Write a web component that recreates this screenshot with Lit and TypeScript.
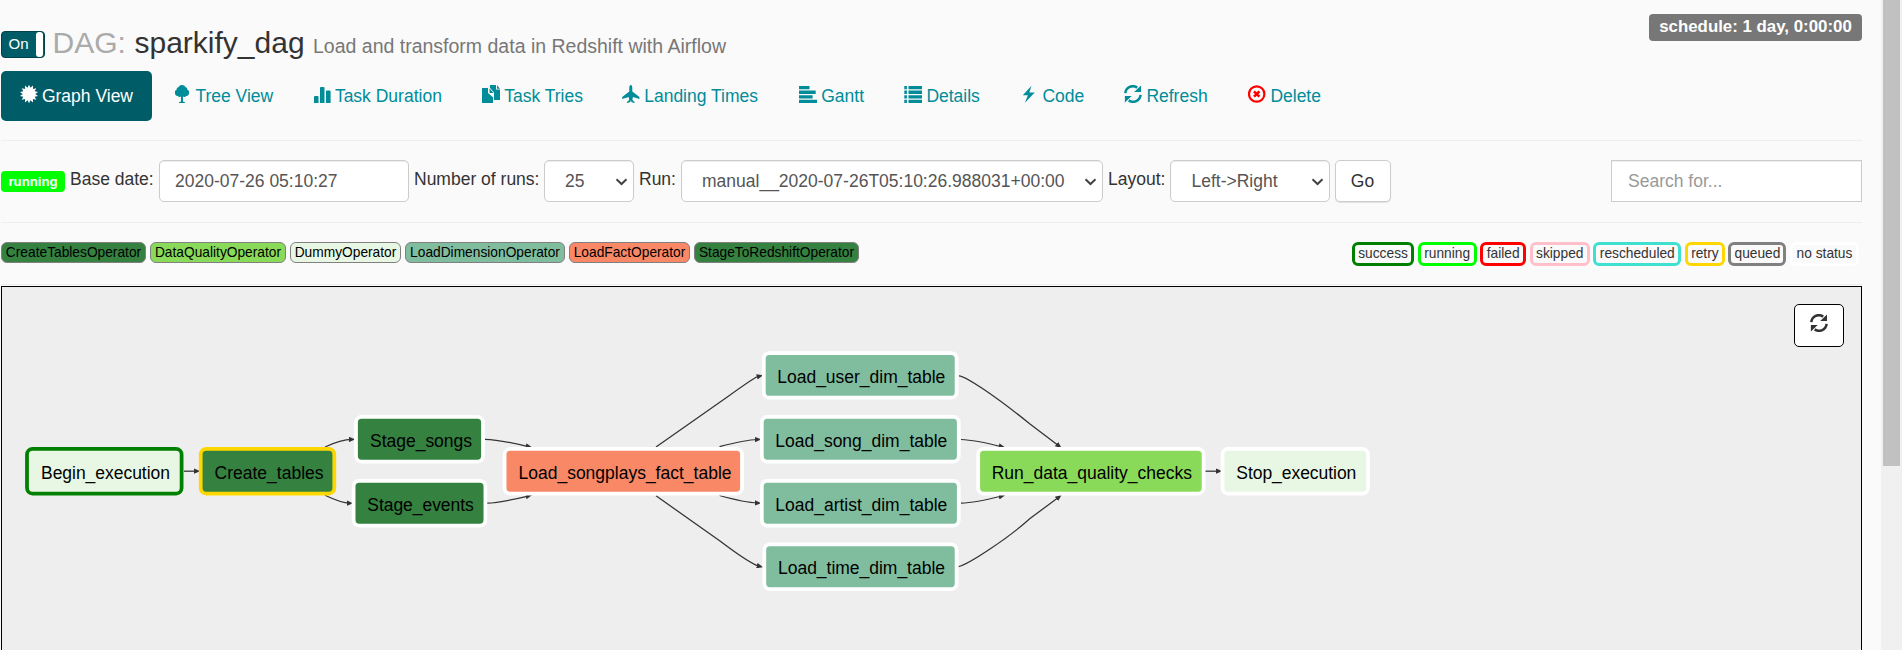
import { LitElement, html, svg, css } from 'lit';
import { customElement } from 'lit/decorators.js';

const refreshShape = svg`
  <path d="M1.3 8.2A7.6 7.6 0 0 1 13.2 2.6" fill="none" stroke="currentColor" stroke-width="2.5"/>
  <path d="M10.2 6.9L17 6.9L17 .4Z" fill="currentColor"/>
  <path d="M16.6 9.8A7.6 7.6 0 0 1 4.7 15.4" fill="none" stroke="currentColor" stroke-width="2.5"/>
  <path d="M7.7 11.1L.9 11.1L.9 17.6Z" fill="currentColor"/>`;

function starPoints(): string {
  const pts: string[] = [];
  for (let i = 0; i < 28; i++) {
    const r = i % 2 ? 6.3 : 9.3;
    const a = (i * Math.PI) / 14 - Math.PI / 2;
    pts.push(`${(9 + r * Math.cos(a)).toFixed(2)},${(9 + r * Math.sin(a)).toFixed(2)}`);
  }
  return pts.join(' ');
}

const icons: Record<string, unknown> = {
  certificate: svg`<polygon points=${starPoints()} fill="currentColor"/>`,
  tree: svg`<path fill="currentColor" d="M9 0C11 0 12.2 1.2 12.5 2.3C14 2.5 14.6 3.8 14.3 4.7C15.9 5.4 16.4 6.5 16 7.8C16.3 9.6 15 11 13.3 11C12.1 12.2 10.8 12 10 11.4V16.4L12 17.2V18H6V17.2L8 16.4V11.4C7.2 12 5.9 12.2 4.7 11C3 11 1.7 9.6 2 7.8C1.6 6.5 2.1 5.4 3.7 4.7C3.4 3.8 4 2.5 5.5 2.3C5.8 1.2 7 0 9 0Z"/>`,
  stats: svg`<path fill="currentColor" d="M1 18V12Q1 11 2 11H4.500Q5.500 11 5.500 12V18ZM7 18V3Q7 2 8 2H10.500Q11.500 2 11.500 3V18ZM13 18V6.500Q13 5.500 14 5.500H16.600Q17.600 5.500 17.600 6.500V18Z"/>`,
  duplicate: svg`<path fill="currentColor" d="M0 3H6V8L11 12.300V18H0ZM7.500 3.600L11.500 8H7.500ZM8 0H14V4.500H18V15H12V7.500L8 3ZM15 .3L18 3.700H15Z"/>`,
  plane: svg`<path fill="currentColor" d="M8.800 0C9.900 0 10.300 1.600 10.300 3V6.500L17.400 12V14L10.900 11.900L10.400 15L12.600 17V18L9.600 17.200L8.800 15.500L8 17.200L5 18V17L7.200 15L6.700 11.900L.2 14V12L7.300 6.500V3C7.300 1.600 7.700 0 8.800 0Z"/>`,
  align: svg`<path fill="currentColor" d="M0 1H10.500V4.300H0ZM0 5.600H16.700V8.900H0ZM0 10.200H13.600V13.500H0ZM0 14.700H18V18H0Z"/>`,
  list: svg`<path fill="currentColor" d="M.3 1H2.900V4.300H.3ZM4.500 1H18V4.300H4.500ZM.3 5.600H2.900V8.900H.3ZM4.500 5.600H18V8.900H4.500ZM.3 10.200H2.900V13.500H.3ZM4.500 10.200H18V13.500H4.500ZM.3 14.700H2.900V18H.3ZM4.500 14.700H18V18H4.500Z"/>`,
  flash: svg`<path fill="currentColor" d="M11.500 .7L2.800 10.300H7.900L4.800 17.900L14.700 7.600H9.300Z"/>`,
  refresh: refreshShape,
  remove: svg`<circle cx="8.700" cy="9" r="7.700" fill="none" stroke="currentColor" stroke-width="2.200"/><path d="M6 6.300L11.400 11.700M11.400 6.300L6 11.700" stroke="currentColor" stroke-width="2.600"/>`,
};

const icon = (name: string) =>
  html`<svg class="icon ${name}" viewBox="0 0 18 18" width="18" height="18">${icons[name]}</svg>`;

const tabs: [string, string, number][] = [
  ['certificate', 'Graph View', 151],
  ['tree', 'Tree View', 137],
  ['stats', 'Task Duration', 166.8],
  ['duplicate', 'Task Tries', 137.5],
  ['plane', 'Landing Times', 174.5],
  ['align', 'Gantt', 102.7],
  ['list', 'Details', 113.5],
  ['flash', 'Code', 101.5],
  ['refresh', 'Refresh', 121.5],
  ['remove', 'Delete', 112],
];

const operators: [string, string, number][] = [
  ['CreateTablesOperator', '#358140', 145],
  ['DataQualityOperator', '#89da59', 136],
  ['DummyOperator', '#e8f7e4', 111],
  ['LoadDimensionOperator', '#80bd9e', 160],
  ['LoadFactOperator', '#f98866', 121],
  ['StageToRedshiftOperator', '#358140', 165],
];

const states: [string, string, number][] = [
  ['success', 'green', 62],
  ['running', 'lime', 59],
  ['failed', 'red', 46],
  ['skipped', 'pink', 60],
  ['rescheduled', 'turquoise', 88],
  ['retry', 'gold', 40],
  ['queued', 'gray', 58],
  ['no status', 'white', 69],
];

interface TaskNode {
  name: string; x: number; y: number; w: number; tx: number; tw: number; fill: string; stroke: string;
}

const nodes: TaskNode[] = [
  { name: 'Begin_execution', x: 27, y: 448.9, w: 154.6, tx: 41, tw: 129, fill: '#e8f7e4', stroke: 'green' },
  { name: 'Create_tables', x: 200.7, y: 448.9, w: 133.6, tx: 214.5, tw: 109, fill: '#358140', stroke: 'gold' },
  { name: 'Stage_songs', x: 356, y: 416.9, w: 127, tx: 370, tw: 102, fill: '#358140', stroke: 'white' },
  { name: 'Stage_events', x: 353.6, y: 480.8, w: 131.8, tx: 367.3, tw: 106.5, fill: '#358140', stroke: 'white' },
  { name: 'Load_songplays_fact_table', x: 504.6, y: 448.9, w: 237.4, tx: 518.5, tw: 213, fill: '#f98866', stroke: 'white' },
  { name: 'Load_user_dim_table', x: 763.8, y: 353, w: 192.8, tx: 777.3, tw: 168, fill: '#80bd9e', stroke: 'white' },
  { name: 'Load_song_dim_table', x: 761.8, y: 416.9, w: 197, tx: 775.3, tw: 172, fill: '#80bd9e', stroke: 'white' },
  { name: 'Load_artist_dim_table', x: 761.8, y: 480.8, w: 197, tx: 775.3, tw: 172, fill: '#80bd9e', stroke: 'white' },
  { name: 'Load_time_dim_table', x: 764.3, y: 544.4, w: 192.3, tx: 778, tw: 167, fill: '#80bd9e', stroke: 'white' },
  { name: 'Run_data_quality_checks', x: 978.2, y: 448.9, w: 225.4, tx: 991.7, tw: 200.3, fill: '#89da59', stroke: 'white' },
  { name: 'Stop_execution', x: 1222.5, y: 448.9, w: 145.5, tx: 1236.3, tw: 120, fill: '#e8f7e4', stroke: 'white' },
];

const edges: string[] = [
  'M184 471.200H197',
  'M325 447Q341 439.500 352 439.400',
  'M325 495.300Q341 503 350 503.200',
  'M485 439.300Q500 439.600 529 446.800',
  'M487 503.200Q500 502.900 529 495.800',
  'M656 447L728 396.500Q751 380 757 376.800L760 376',
  'M719.500 446.700Q745 439.800 758 439.500',
  'M719.500 495.500Q745 502.600 758 503',
  'M656 495.800L720 541Q745 560 757 565.600L760 566.400',
  'M959 375.800Q964 376 984 389.500T1030 424L1059 446',
  'M961 439.500Q975 440 1002 446.800',
  'M961 503.200Q975 502.700 1002 496',
  'M958.500 566.600Q966 565 990 549T1030 518.500L1059 497',
  'M1205 471.200H1219',
];

@customElement('app-root')
export class AppRoot extends LitElement {
  static styles = css`
    :host { display: block; font-family: "Liberation Sans", Arial, sans-serif; font-size: 17.5px; line-height: 25px; color: #333; }
    * { box-sizing: border-box; }
    .window { display: grid; grid-template-columns: 1881px 21px; height: 650px; overflow: hidden; background: #fafafa; }
    .page { padding: 0 19px 0 1px; overflow: hidden; height: 650px; min-width: 0; }
    .track { background: #f0f0f0; padding: 0 2px; }
    .thumb { height: 466px; background: #c1c1c1; }
    .header { display: flex; height: 71px; padding-top: 14px; justify-content: space-between; align-items: flex-start; }
    .heading { display: flex; align-items: baseline; padding-top: 11px; white-space: pre; }
    .toggle { align-self: flex-start; margin-top: 6px; width: 44px; height: 27px; border: 1px solid #00434b; border-radius: 4px; background: #005c66; color: #fff; font-size: 15px; line-height: 24px; padding-left: 6.500px; display: flex; justify-content: space-between; overflow: hidden; }
    .knob { width: 7px; background: #fff; border-radius: 3px; margin-right: 1px; }
    .dag { font-size: 30px; line-height: 36px; color: #aaa; margin-left: 7.500px; width: 82px; }
    .name { font-size: 30px; line-height: 36px; width: 178.500px; color: #333; }
    .desc { font-size: 19.500px; color: #777; }
    .schedule { background: #777; color: #fff; font-weight: bold; font-size: 16.850px; line-height: 25px; height: 27px; width: 213px; text-align: center; border-radius: 4px; white-space: nowrap; }
    .tabs { display: flex; gap: 2.500px; height: 50px; }
    .tab { display: flex; align-items: center; gap: 4.400px; padding-left: 18.500px; height: 50px; border-radius: 5px; color: #008c99; white-space: nowrap; flex: none; }
    .tab.active { background: #005c66; color: #fff; }
    .icon { flex: none; margin-bottom: 4px; }
    .icon.remove { color: #f00; }
    .rule { height: 1px; background: #eee; }
    .controls { display: flex; height: 42px; margin: 19px 0 20px; }
    .rule.first { margin-top: 19px; }
    .badge { background: lime; color: #fff; font-weight: bold; font-size: 13.200px; line-height: 21px; height: 21px; width: 64px; margin: 11px 5px 0 0; text-align: center; border-radius: 4px; }
    .label { padding-top: 7px; white-space: nowrap; flex: none; }
    .base { width: 89px; } .runs { width: 130px; margin-left: 5px; } .run { width: 42px; margin-left: 5px; } .layout { width: 61.500px; margin-left: 5px; }
    .field { height: 42px; border: 1px solid #ccc; border-radius: 5px; background: #fff; box-shadow: inset 0 1px 1px rgba(0,0,0,.075); color: #555; display: flex; align-items: center; justify-content: space-between; padding: 1px 5px 0 20px; flex: none; white-space: nowrap; }
    .date { width: 250px; padding-left: 15px; }
    .num { width: 90px; } .runid { width: 422px; } .dir { width: 160px; padding-left: 21px; }
    .go { width: 56px; margin-left: 5px; color: #333; justify-content: center; padding: 1px 0 0; box-shadow: 0 1px 1px rgba(0,0,0,.1); }
    .search { width: 251px; margin-left: auto; padding-left: 16px; border-radius: 0; color: #999; }
    .legend { display: flex; justify-content: space-between; height: 61px; padding-top: 19px; font-size: 13.750px; }
    .ops { display: flex; gap: 4px; }
    .op { height: 21px; border: 1px solid #808080; border-radius: 6px; line-height: 20px; text-align: center; color: #000; white-space: nowrap; }
    .states { display: flex; gap: 3.570px; padding-right: 3px; }
    .state { height: 24px; border: 3px solid; border-radius: 6px; line-height: 17px; text-align: center; white-space: nowrap; }
    .state span { color: #333; }
    .canvas { position: relative; height: 365px; margin-top: 1px; border: 1px solid #000; border-bottom: 0; background: #eee; }
    .graph { display: block; }
    .graph text { font-size: 17.500px; fill: #000; }
    .recenter { position: absolute; right: 17px; top: 17px; width: 50px; height: 43px; border: 1px solid #000; border-radius: 5px; background: #fff; display: flex; align-items: center; justify-content: center; color: #333; }
    .recenter .icon { margin-bottom: 5px; }
  `;

  private chevron() {
    return html`<svg width="13" height="9" viewBox="0 0 13 9"><path d="M1.500 2.200L6.500 7L11.500 2.200" fill="none" stroke="#444" stroke-width="2"/></svg>`;
  }

  render() {
    return html`
      <div class="window">
        <main class="page">
          <div class="header">
            <div class="heading">
              <span class="toggle">On<span class="knob"></span></span>
              <span class="dag">DAG:</span><span class="name">sparkify_dag</span>
              <span class="desc">Load and transform data in Redshift with Airflow</span>
            </div>
            <span class="schedule">schedule: 1 day, 0:00:00</span>
          </div>
          <nav class="tabs">
            ${tabs.map(([i, t, w], n) => html`<a class="tab ${n ? '' : 'active'}" style="width:${w}px">${icon(i)}<span>${t}</span></a>`)}
          </nav>
          <div class="rule first"></div>
          <div class="controls">
            <span class="badge">running</span>
            <span class="label base">Base date:</span><div class="field date">2020-07-26 05:10:27</div>
            <span class="label runs">Number of runs:</span><div class="field num">25${this.chevron()}</div>
            <span class="label run">Run:</span><div class="field runid">manual__2020-07-26T05:10:26.988031+00:00${this.chevron()}</div>
            <span class="label layout">Layout:</span><div class="field dir">Left-&gt;Right${this.chevron()}</div>
            <div class="field go">Go</div>
            <div class="field search">Search for...</div>
          </div>
          <div class="rule"></div>
          <div class="legend">
            <div class="ops">${operators.map(([t, c, w]) => html`<span class="op" style="background:${c};width:${w}px">${t}</span>`)}</div>
            <div class="states">${states.map(([t, c, w]) => html`<span class="state" style="border-color:${c};width:${w}px"><span>${t}</span></span>`)}</div>
          </div>
          <div class="rule"></div>
          <div class="canvas">
            <svg class="graph" width="1859" height="363" viewBox="2 287 1859 363">
              <defs>
                <marker id="arrow" viewBox="0 0 10 10" refX="5" refY="5" markerWidth="6.500" markerHeight="5.500" markerUnits="userSpaceOnUse" orient="auto" preserveAspectRatio="none">
                  <path d="M0 0L10 5L0 10Z" fill="#333"/>
                </marker>
              </defs>
              ${edges.map((d) => svg`<path d=${d} fill="none" stroke="#333" stroke-width="1.250" marker-end="url(#arrow)"/>`)}
              ${nodes.map((n) => svg`
                <rect x=${n.x} y=${n.y} width=${n.w} height="44.700" rx="5.500" fill=${n.fill} stroke=${n.stroke} stroke-width="3.750"/>
                <text x=${n.tx} y=${Math.round(n.y + 30)} textLength=${n.tw}>${n.name}</text>`)}
            </svg>
            <div class="recenter">${icon('refresh')}</div>
          </div>
        </main>
        <div class="track"><div class="thumb"></div></div>
      </div>`;
  }
}
